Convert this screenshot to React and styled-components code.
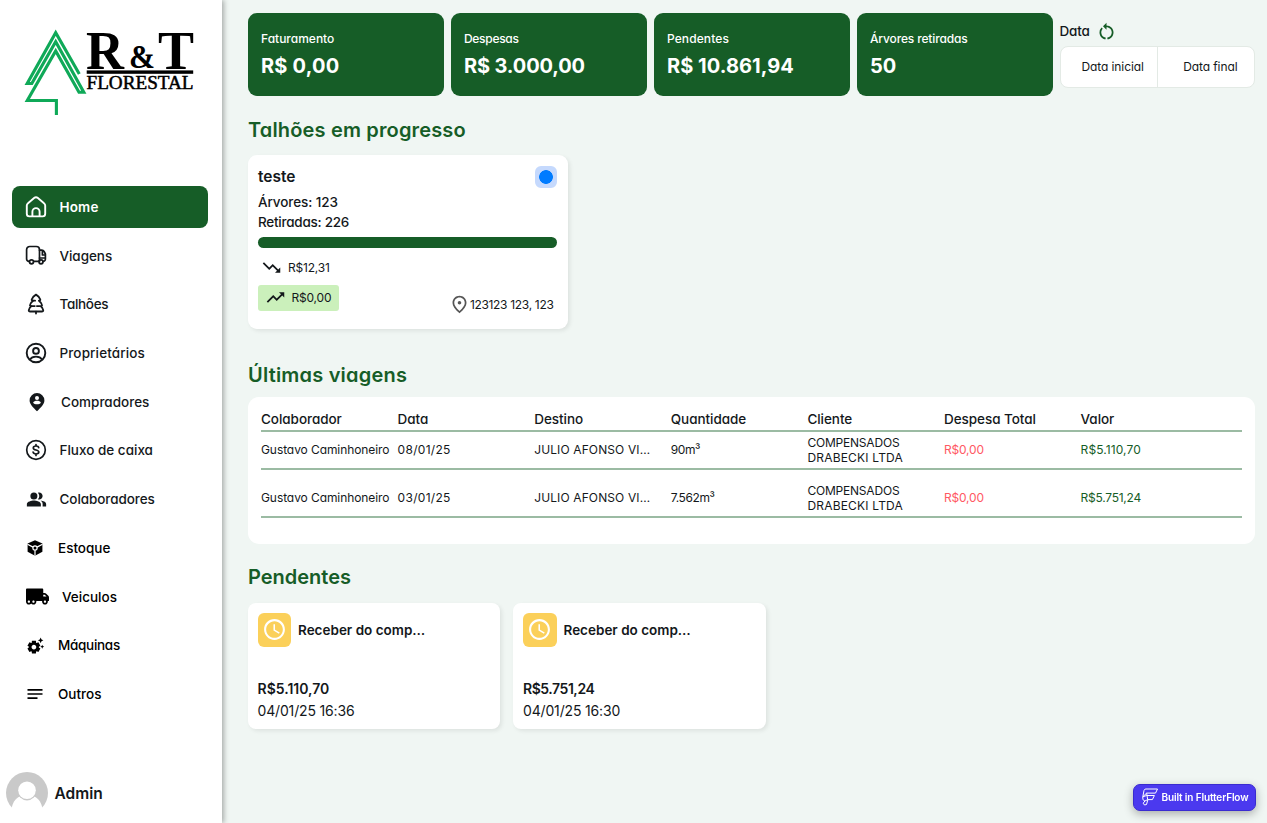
import React from "react";
import styled, { createGlobalStyle } from "styled-components";
import {
  MdPeopleAlt,
  MdSettingsSuggest,
  MdNotes,
  MdRestartAlt,
  MdTrendingDown,
  MdTrendingUp,
  MdOutlinePlace,
  MdSchedule,
} from "react-icons/md";
import { FaTruckMoving } from "react-icons/fa";

const HomeIcon = () => (
  <svg width="24" height="24" viewBox="0 0 24 24" fill="none" stroke="currentColor" strokeWidth="1.9" strokeLinejoin="round">
    <path d="M2.8 10.6c0-1 .4-1.8 1.2-2.4l6.1-5.1c1.1-.9 2.7-.9 3.8 0L20 8.2c.8.6 1.2 1.4 1.2 2.4v8.2c0 1.7-.8 2.6-2.5 2.6H5.3c-1.7 0-2.5-.9-2.5-2.6z" />
    <path d="M8.4 21.3v-4.6a3.6 3.6 0 0 1 7.2 0v4.6" />
  </svg>
);

const TruckIcon = () => (
  <svg width="24" height="24" viewBox="0 0 24 24" fill="none" stroke="currentColor" strokeWidth="1.7" strokeLinejoin="round" strokeLinecap="round">
    <path d="M5.3 17.4H4.9a2.3 2.3 0 0 1-2.3-2.3V5.7A3.2 3.2 0 0 1 5.8 2.5h6.5a3.2 3.2 0 0 1 3.2 3.2v11.7H9.8" />
    <path d="M15.5 6.2h2.4c1 0 1.7.5 2.2 1.3l1.3 2.5v5.1a2.3 2.3 0 0 1-2.3 2.3M18.4 6.4v4.6h3M15.5 14h5.9" />
    <circle cx="7.5" cy="17.8" r="2" />
    <circle cx="17" cy="17.8" r="2" />
  </svg>
);

const TreeIcon = () => (
  <svg width="24" height="24" viewBox="0 0 24 24" fill="none" stroke="currentColor" strokeWidth="1.8" strokeLinejoin="round" strokeLinecap="round">
    <path d="M12 2.6c1.8 1 3.6 2.7 4.3 4.9.2.7-.3 1.1-1.4 1.2 1.5 1.1 2.7 2.6 3.1 4.2.2.7-.3 1.1-1.5 1.2 1.4 1 2.3 2.4 2.7 4 .2.9-.3 1.4-1.3 1.4H6.1c-1 0-1.5-.5-1.3-1.4.4-1.6 1.3-3 2.7-4-1.2-.1-1.7-.5-1.5-1.2.4-1.6 1.6-3.1 3.1-4.2-1.1-.1-1.6-.5-1.4-1.2.7-2.2 2.5-3.9 4.3-4.9z" />
    <path d="M9.1 8.7h2M7.5 14.1h3.3M12.9 14.1h2.5M12 19.6v2" />
  </svg>
);

const UserIcon = () => (
  <svg width="24" height="24" viewBox="0 0 24 24" fill="none" stroke="currentColor" strokeWidth="1.9">
    <circle cx="12" cy="12" r="9.3" />
    <circle cx="12" cy="9.9" r="2.9" />
    <path d="M5.9 18.6c1.2-2 3.4-3 6.1-3s4.9 1 6.1 3" />
  </svg>
);

const PersonPinIcon = () => (
  <svg width="24" height="24" viewBox="0 0 24 24">
    <path d="M12 3a7.4 7.4 0 0 0-7.4 7.4c0 3.9 3.7 6.9 7.4 10.9 3.7-4 7.4-7 7.4-10.9A7.4 7.4 0 0 0 12 3z" fill="currentColor" />
    <circle cx="12" cy="7.9" r="2" fill="#fff" />
    <path d="M8.1 12.7c.6-1.3 2.2-1.9 3.9-1.9s3.3.6 3.9 1.9c-.9 1-2.2 1.6-3.9 1.6s-3-.6-3.9-1.6z" fill="#fff" />
  </svg>
);

const DollarIcon = () => (
  <svg width="24" height="24" viewBox="0 0 24 24" fill="none" stroke="currentColor" strokeWidth="1.7" strokeLinecap="round">
    <circle cx="12" cy="12" r="9.3" />
    <path d="M14.7 9.7c-.2-1-1.2-1.7-2.7-1.7s-2.7.7-2.7 1.9c0 2.9 5.5 1.3 5.5 4.2 0 1.2-1.2 1.9-2.8 1.9s-2.7-.7-2.9-1.8M12 6.6v1.4M12 16v1.4" />
  </svg>
);

const CubeIcon = () => (
  <svg width="24" height="24" viewBox="0 0 24 24">
    <path d="M12 4.2l7.4 3.3v8.3L12 19.7l-7.4-3.9V7.5z" fill="currentColor" />
    <path d="M4.5 8.3l5.5 2.8M19.5 8.3L14 11.1M12 14v5.8" stroke="#fff" strokeWidth="1.2" />
    <circle cx="12" cy="11.9" r="2.1" fill="currentColor" stroke="#fff" strokeWidth="1.2" />
  </svg>
);

const Logo = () => (
  <svg width="172" height="108" viewBox="24 10 172 108">
    <path
      d="M79.3 74L55.7 32.7 27.2 83.5h4.6L55.7 41.7l28.1 50.5h-4.8L55.7 51 27.3 100.5H56.4V115"
      fill="none"
      stroke="#0fa958"
      strokeWidth="3.1"
    />
    <LogoText x="86" y="69" $size={55} textLength="38" lengthAdjust="spacingAndGlyphs">R</LogoText>
    <LogoText x="129" y="67.5" $size={34} textLength="26" lengthAdjust="spacingAndGlyphs">&amp;</LogoText>
    <LogoText x="158" y="69" $size={55} textLength="36" lengthAdjust="spacingAndGlyphs">T</LogoText>
    <rect x="86.7" y="70.4" width="106.5" height="3.4" />
    <LogoSubtitle x="86.5" y="88.5" $size={19} textLength="107" lengthAdjust="spacingAndGlyphs">FLORESTAL</LogoSubtitle>
  </svg>
);

const FlutterFlowIcon = () => (
  <svg width="18" height="18" viewBox="0 0 18 18" fill="none" stroke="#fff" strokeWidth="1" strokeLinejoin="round">
    <path d="M4.2 1h12.3l-2 4.1H5.6L1.8 8.8 3 2.5z" />
    <path d="M1.8 8.8l3.8-1.3h7.8l-2 4.1H6.7L3.9 13l-2-1.4zM5.6 5.1l1.1 6.500M3.900 13l-1.700 2.200 1.300 1.800 2-.5 1.400-4.900" />
  </svg>
);

const menu = [
  { label: "Home", icon: <HomeIcon />, active: true, ls: 0.15 },
  { label: "Viagens", icon: <TruckIcon />, ls: -0.05 },
  { label: "Talhões", icon: <TreeIcon />, ls: -0.33 },
  { label: "Proprietários", icon: <UserIcon />, ls: 0.12 },
  { label: "Compradores", icon: <PersonPinIcon />, shift: 1.5 },
  { label: "Fluxo de caixa", icon: <DollarIcon /> },
  { label: "Colaboradores", icon: <MdPeopleAlt size={21} />, ls: -0.08 },
  { label: "Estoque", icon: <CubeIcon />, shift: -1.5, black: true },
  { label: "Veiculos", icon: <FaTruckMoving size={23} />, shift: 2.5, black: true },
  { label: "Máquinas", icon: <MdSettingsSuggest size={19} />, shift: -1.5, ls: -0.3, black: true },
  { label: "Outros", icon: <MdNotes size={20} />, shift: -1.5, black: true },
];

const stats = [
  { label: "Faturamento", value: "R$ 0,00", valueLs: 0.2 },
  { label: "Despesas", value: "R$ 3.000,00", ls: -0.3, valueLs: -0.15 },
  { label: "Pendentes", value: "R$ 10.861,94", ls: 0.1, valueLs: 0.05 },
  { label: "Árvores retiradas", value: "50", ls: -0.15 },
];

const columns = ["Colaborador", "Data", "Destino", "Quantidade", "Cliente", "Despesa Total", "Valor"];

const trips = [
  { date: "08/01/25", amount: "90m³", value: "R$5.110,70", ls: 0.1 },
  { date: "03/01/25", amount: "7.562m³", value: "R$5.751,24", ls: -0.25 },
];

const pendings = [
  { value: "R$5.110,70", date: "04/01/25 16:36" },
  { value: "R$5.751,24", date: "04/01/25 16:30", ls: -0.45 },
];

const App = () => {
  return (
    <Page>
      <GlobalStyle />
      <Sidebar>
        <LogoBox>
          <Logo />
        </LogoBox>
        <Menu>
          {menu.map((item) => (
            <MenuItem key={item.label} $active={item.active} $black={item.black} $ls={item.ls}>
              <MenuIcon $shift={item.shift}>{item.icon}</MenuIcon>
              {item.label}
            </MenuItem>
          ))}
        </Menu>
        <User>
          <svg width="42" height="42" viewBox="0 0 42 42">
            <circle cx="21" cy="21" r="21" fill="#c9c9c9" />
            <path d="M5.5 37C6.5 31 9 26.5 14 24.5h14c5 2 7.5 6.5 8.5 12.5L34 42H8z" fill="#fff" />
            <circle cx="21" cy="18.8" r="9.6" fill="#c9c9c9" />
            <circle cx="21" cy="18.3" r="8.8" fill="#fff" />
          </svg>
          Admin
        </User>
      </Sidebar>

      <Main>
        <TopRow>
          {stats.map((stat) => (
            <StatCard key={stat.label}>
              <StatLabel $ls={stat.ls}>{stat.label}</StatLabel>
              <StatValue $ls={stat.valueLs}>{stat.value}</StatValue>
            </StatCard>
          ))}
          <DateFilter>
            <DateTitle>
              Data <MdRestartAlt size={21} />
            </DateTitle>
            <DateBox>
              <DateField $width={97} $left={21}>Data inicial</DateField>
              <DateField $width={97} $left={25}>Data final</DateField>
            </DateBox>
          </DateFilter>
        </TopRow>

        <Heading $top={20.5} $ls={0.16}>Talhões em progresso</Heading>
        <PlotCard>
          <PlotHeader>
            <PlotTitle>teste</PlotTitle>
            <Status />
          </PlotHeader>
          <PlotLine $ls={-0.08}>Árvores: 123</PlotLine>
          <PlotLine $ls={-0.25}>Retiradas: 226</PlotLine>
          <Progress />
          <PlotFooter>
            <div>
              <Expense>
                <MdTrendingDown size={21} /> R$12,31
              </Expense>
              <Income>
                <MdTrendingUp size={21} /> R$0,00
              </Income>
            </div>
            <Place>
              <MdOutlinePlace size={21} /> 123123 123, 123
            </Place>
          </PlotFooter>
        </PlotCard>

        <Heading $top={33} $ls={0.2}>Últimas viagens</Heading>
        <Table>
          <HeadRow>
            {columns.map((name) => (
              <span key={name}>{name}</span>
            ))}
          </HeadRow>
          {trips.map((trip) => (
            <TripRow key={trip.date}>
              <Cell $ls={-0.08}>Gustavo Caminhoneiro</Cell>
              <Cell $ls={0.3}>{trip.date}</Cell>
              <Cell $ls={0.12}>JULIO AFONSO VI…</Cell>
              <Cell $ls={-0.4}>{trip.amount}</Cell>
              <Client>
                <Cell $ls={-0.2}>COMPENSADOS</Cell>
                <Cell $ls={0.2}>DRABECKI LTDA</Cell>
              </Client>
              <Cell $color="#ff5963" $ls={-0.2}>R$0,00</Cell>
              <Cell $color="#165d27" $ls={trip.ls}>{trip.value}</Cell>
            </TripRow>
          ))}
        </Table>

        <Heading $top={20}>Pendentes</Heading>
        <PendingList>
          {pendings.map((item) => (
            <PendingCard key={item.value}>
              <PendingHeader>
                <ClockBox>
                  <MdSchedule size={25} />
                </ClockBox>
                Receber do comp…
              </PendingHeader>
              <PendingValue $ls={item.ls}>{item.value}</PendingValue>
              <PendingDate>{item.date}</PendingDate>
            </PendingCard>
          ))}
        </PendingList>
      </Main>

      <Badge>
        <FlutterFlowIcon /> Built in FlutterFlow
      </Badge>
    </Page>
  );
};

export default App;

const GlobalStyle = createGlobalStyle`
  * {
    box-sizing: border-box;
  }

  body {
    margin: 0;
    font-family: Inter, "Open Sans", sans-serif;
    font-feature-settings: "cv11";
    color: #14181b;
    background-color: #f0f6f3;
  }

  svg {
    flex-shrink: 0;
  }
`;

const Page = styled.div`
  display: flex;
  width: 1267px;
  height: 823px;
  overflow: hidden;
`;

const Sidebar = styled.aside`
  display: flex;
  flex-direction: column;
  width: 222px;
  flex-shrink: 0;
  background-color: white;
  box-shadow: 2px 0 5px rgba(0, 0, 0, 0.3);
`;

const LogoBox = styled.div`
  height: 186px;
  padding: 10px 0 0 24px;
`;

const LogoText = styled.text`
  font-family: "Liberation Serif", serif;
  font-weight: bold;
  font-size: ${(p) => p.$size}px;
`;

const LogoSubtitle = styled(LogoText)`
  font-weight: normal;
  stroke: black;
  stroke-width: 0.5px;
`;

const Menu = styled.nav`
  display: flex;
  flex-direction: column;
  gap: 6.7px;
  padding: 0 14px 0 12px;
`;

const MenuItem = styled.div`
  display: flex;
  align-items: center;
  height: 42px;
  padding-left: 12px;
  border-radius: 8px;
  font-size: 13.5px;
  font-weight: ${(p) => (p.$active ? 600 : 500)};
  letter-spacing: ${(p) => p.$ls || 0}px;
  color: ${(p) => (p.$active ? "white" : p.$black ? "black" : "#14181b")};
  background-color: ${(p) => (p.$active ? "#165d27" : "transparent")};
  cursor: pointer;
`;

const MenuIcon = styled.span`
  display: flex;
  align-items: center;
  justify-content: center;
  width: ${(p) => 24 + (p.$shift || 0)}px;
  margin-right: 11.5px;
`;

const User = styled.div`
  display: flex;
  align-items: center;
  gap: 6.5px;
  margin-top: auto;
  padding: 0 0 9px 6px;
  font-size: 15.5px;
  font-weight: 600;
`;

const Main = styled.main`
  flex: 1;
  padding: 12.5px 12px 0 25.5px;
`;

const TopRow = styled.div`
  display: flex;
  gap: 6.5px;
`;

const StatCard = styled.div`
  display: flex;
  flex-direction: column;
  justify-content: center;
  gap: 6px;
  width: 196.5px;
  height: 83.5px;
  padding-left: 13.5px;
  border-radius: 9px;
  color: white;
  background-color: #165d27;
`;

const StatLabel = styled.span`
  font-size: 12px;
  font-weight: 500;
  line-height: 18px;
  letter-spacing: ${(p) => p.$ls || 0}px;
`;

const StatValue = styled.span`
  font-size: 20px;
  font-weight: 700;
  line-height: 24px;
  letter-spacing: ${(p) => p.$ls || 0}px;
`;

const DateFilter = styled.div`
  flex: 1;
  padding-top: 8.5px;
`;

const DateTitle = styled.div`
  display: flex;
  align-items: center;
  gap: 6.5px;
  height: 20px;
  font-size: 13.5px;
  font-weight: 500;
  letter-spacing: -0.2px;

  svg {
    color: #165d27;
  }
`;

const DateBox = styled.div`
  display: flex;
  width: 195.5px;
  height: 42px;
  margin-top: 5px;
  border: 1px solid #e3eae5;
  border-radius: 8px;
  background-color: white;
`;

const DateField = styled.div`
  width: ${(p) => p.$width}px;
  padding-left: ${(p) => p.$left}px;
  font-size: 12px;
  line-height: 40px;
  letter-spacing: -0.1px;

  & + & {
    border-left: 1px solid #e3eae5;
  }
`;

const Heading = styled.h2`
  margin: ${(p) => p.$top}px 0 0;
  padding-left: 0.5px;
  font-size: 20px;
  font-weight: 600;
  line-height: 26px;
  letter-spacing: ${(p) => p.$ls || 0}px;
  color: #165d27;
`;

const PlotCard = styled.section`
  width: 320px;
  height: 173.5px;
  margin-top: 12.5px;
  padding: 10.5px;
  border-radius: 9px;
  background-color: white;
  box-shadow: 2px 2px 4px rgba(0, 0, 0, 0.08);
`;

const PlotHeader = styled.div`
  display: flex;
  justify-content: space-between;
  height: 26px;
`;

const PlotTitle = styled.span`
  font-size: 15.5px;
  font-weight: 600;
  line-height: 22px;
`;

const Status = styled.span`
  width: 22px;
  height: 22px;
  border: 4px solid #c5d9fd;
  border-radius: 6px;
  background: radial-gradient(circle, #007bff 6.5px, #c5d9fd 7.2px);
`;

const PlotLine = styled.div`
  font-size: 13.5px;
  font-weight: 500;
  line-height: 20.5px;
  letter-spacing: ${(p) => p.$ls}px;
`;

const Progress = styled.div`
  height: 10.5px;
  margin-top: 4.5px;
  border-radius: 6px;
  background-color: #165d27;
`;

const PlotFooter = styled.div`
  display: flex;
  justify-content: space-between;
  font-size: 12px;
  letter-spacing: -0.2px;
`;

const Expense = styled.div`
  display: flex;
  align-items: center;
  gap: 6px;
  height: 26px;
  margin-top: 7px;
  padding-left: 3px;
`;

const Income = styled(Expense)`
  width: 80.5px;
  margin-top: 4px;
  padding-left: 6.5px;
  border-radius: 3px;
  background-color: #cbf0bb;
`;

const Place = styled.div`
  display: flex;
  align-items: center;
  height: 20px;
  margin: 47px 3.5px 0 0;
  letter-spacing: -0.32px;

  svg {
    color: #555;
  }
`;

const Table = styled.section`
  width: 1007px;
  height: 147px;
  margin-top: 9px;
  margin-left: 0.5px;
  padding: 9px 13px 0;
  border-radius: 11px;
  background-color: white;
`;

const HeadRow = styled.div`
  display: grid;
  grid-template-columns: repeat(7, 136.6px);
  height: 26px;
  border-bottom: 2px solid #9bbba3;
  font-size: 13.5px;
  font-weight: 500;
  line-height: 26px;
  letter-spacing: -0.05px;
`;

const TripRow = styled.div`
  display: grid;
  grid-template-columns: repeat(7, 136.6px);
  align-items: center;
  height: 38px;
  padding-bottom: 1px;
  border-bottom: 2px solid #9bbba3;
  font-size: 12px;
  line-height: 15px;

  & + & {
    margin-top: 10px;
  }
`;

const Cell = styled.span`
  letter-spacing: ${(p) => p.$ls || 0}px;
  color: ${(p) => p.$color || "inherit"};
`;

const Client = styled.div`
  display: flex;
  flex-direction: column;
  padding-top: 2px;
`;

const PendingList = styled.div`
  display: flex;
  gap: 13px;
  margin-top: 13px;
`;

const PendingCard = styled.article`
  width: 252.5px;
  height: 126.5px;
  padding: 10px;
  border-radius: 8px;
  background-color: white;
  box-shadow: 2px 2px 4px rgba(0, 0, 0, 0.08);
`;

const PendingHeader = styled.div`
  display: flex;
  align-items: center;
  gap: 7px;
  font-size: 13.5px;
  font-weight: 600;
`;

const ClockBox = styled.span`
  display: flex;
  align-items: center;
  justify-content: center;
  width: 33.5px;
  height: 34px;
  border-radius: 6px;
  color: white;
  background-color: #fbd05a;
`;

const PendingValue = styled.div`
  margin-top: 31px;
  font-size: 14px;
  font-weight: 600;
  line-height: 22px;
  letter-spacing: ${(p) => p.$ls || 0}px;
`;

const PendingDate = styled.div`
  font-size: 14px;
  line-height: 22px;
  letter-spacing: -0.16px;
`;

const Badge = styled.a`
  position: fixed;
  right: 11px;
  bottom: 12.5px;
  display: flex;
  align-items: center;
  gap: 3px;
  width: 123px;
  height: 27px;
  padding-left: 6.5px;
  border: 1px solid #3a2bd0;
  border-radius: 7px;
  font-size: 10px;
  font-weight: 600;
  letter-spacing: -0.13px;
  line-height: 12px;
  white-space: nowrap;
  color: white;
  background-color: #4b39ef;
  box-shadow: 0 3px 10px rgba(0, 0, 0, 0.3);
`;
